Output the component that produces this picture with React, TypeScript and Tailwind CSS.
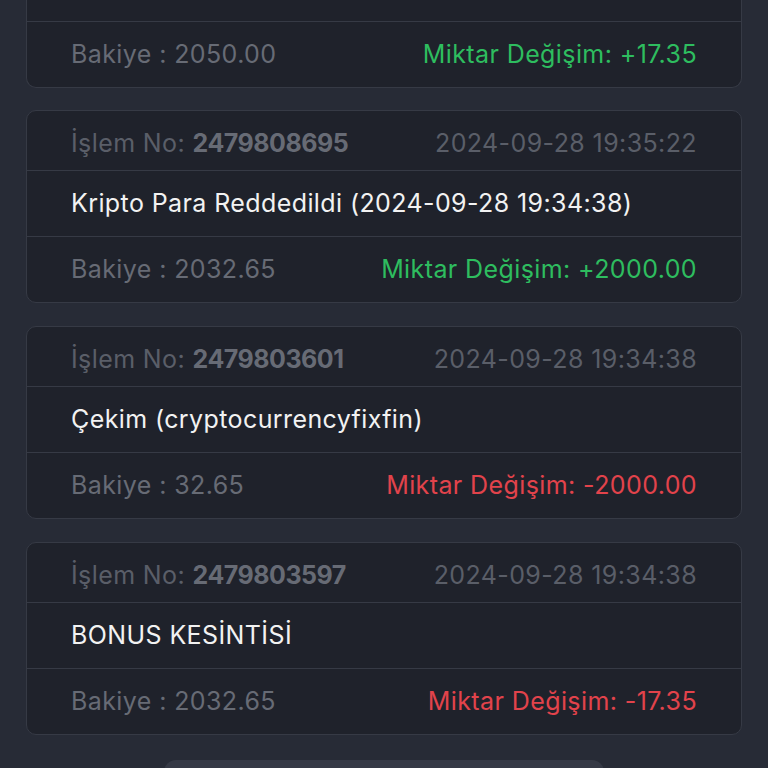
import React from 'react';

interface Tx {
  id: string;
  date: string;
  title: string;
  balance: string;
  change: string;
  positive: boolean;
}

const txs: Tx[] = [
  { id: '2479808695', date: '2024-09-28 19:35:22', title: 'Kripto Para Reddedildi (2024-09-28 19:34:38)', balance: '2032.65', change: '+2000.00', positive: true },
  { id: '2479803601', date: '2024-09-28 19:34:38', title: 'Çekim (cryptocurrencyfixfin)', balance: '32.65', change: '-2000.00', positive: false },
  { id: '2479803597', date: '2024-09-28 19:34:38', title: 'BONUS KESİNTİSİ', balance: '2032.65', change: '-17.35', positive: false },
];

const Footer: React.FC<{ balance: string; change: string; positive: boolean }> = ({ balance, change, positive }) => (
  <div className="h-[65px] px-[44px] flex justify-between items-center">
    <span className="text-[#676b75]">Bakiye : {balance}</span>
    <span className={positive ? 'text-[#2ebd5f]' : 'text-[#e2434b]'}>Miktar Değişim: {change}</span>
  </div>
);

const TxCard: React.FC<{ tx: Tx }> = ({ tx }) => {
  return (
    <div className="bg-[#1f222b] border border-[#363a45] rounded-[10px] overflow-hidden">
      <div className="h-[60px] px-[44px] pt-[5px] flex justify-between items-center border-b border-[#363a45]">
        <span className="text-[#5a5e68]">
          İşlem No: <span className="font-bold text-[#676b75] tracking-[-0.5px]">{tx.id}</span>
        </span>
        <span className="text-[#5a5e68]">{tx.date}</span>
      </div>
      <div className="h-[66px] px-[44px] flex items-center border-b border-[#363a45]">
        <span className="text-[#f2f2f2]">{tx.title}</span>
      </div>
      <Footer balance={tx.balance} change={tx.change} positive={tx.positive} />
    </div>
  );
};

export default function App() {
  return (
    <div
      className="w-[768px] h-[768px] overflow-hidden bg-[#272b36] text-[25px] tracking-[0.4px] leading-none"
      style={{ fontFamily: 'Inter, "Noto Sans", sans-serif' }}
    >
      <div className="px-[26px] flex flex-col w-[768px]">
        {/* card cut off by the top of the screen */}
        <div className="bg-[#1f222b] border-x border-b border-[#363a45] rounded-b-[10px] overflow-hidden mb-[22px]">
          <div className="h-[22px] border-b border-[#363a45]" />
          <Footer balance="2050.00" change="+17.35" positive />
        </div>
        <div className="flex flex-col gap-[23px]">
          {txs.map((tx) => (
            <TxCard key={tx.id} tx={tx} />
          ))}
        </div>
        <div className="flex justify-center mt-[25px]">
          <div className="w-[440px] h-[40px] bg-[#353945] rounded-[12px]" />
        </div>
      </div>
    </div>
  );
}
